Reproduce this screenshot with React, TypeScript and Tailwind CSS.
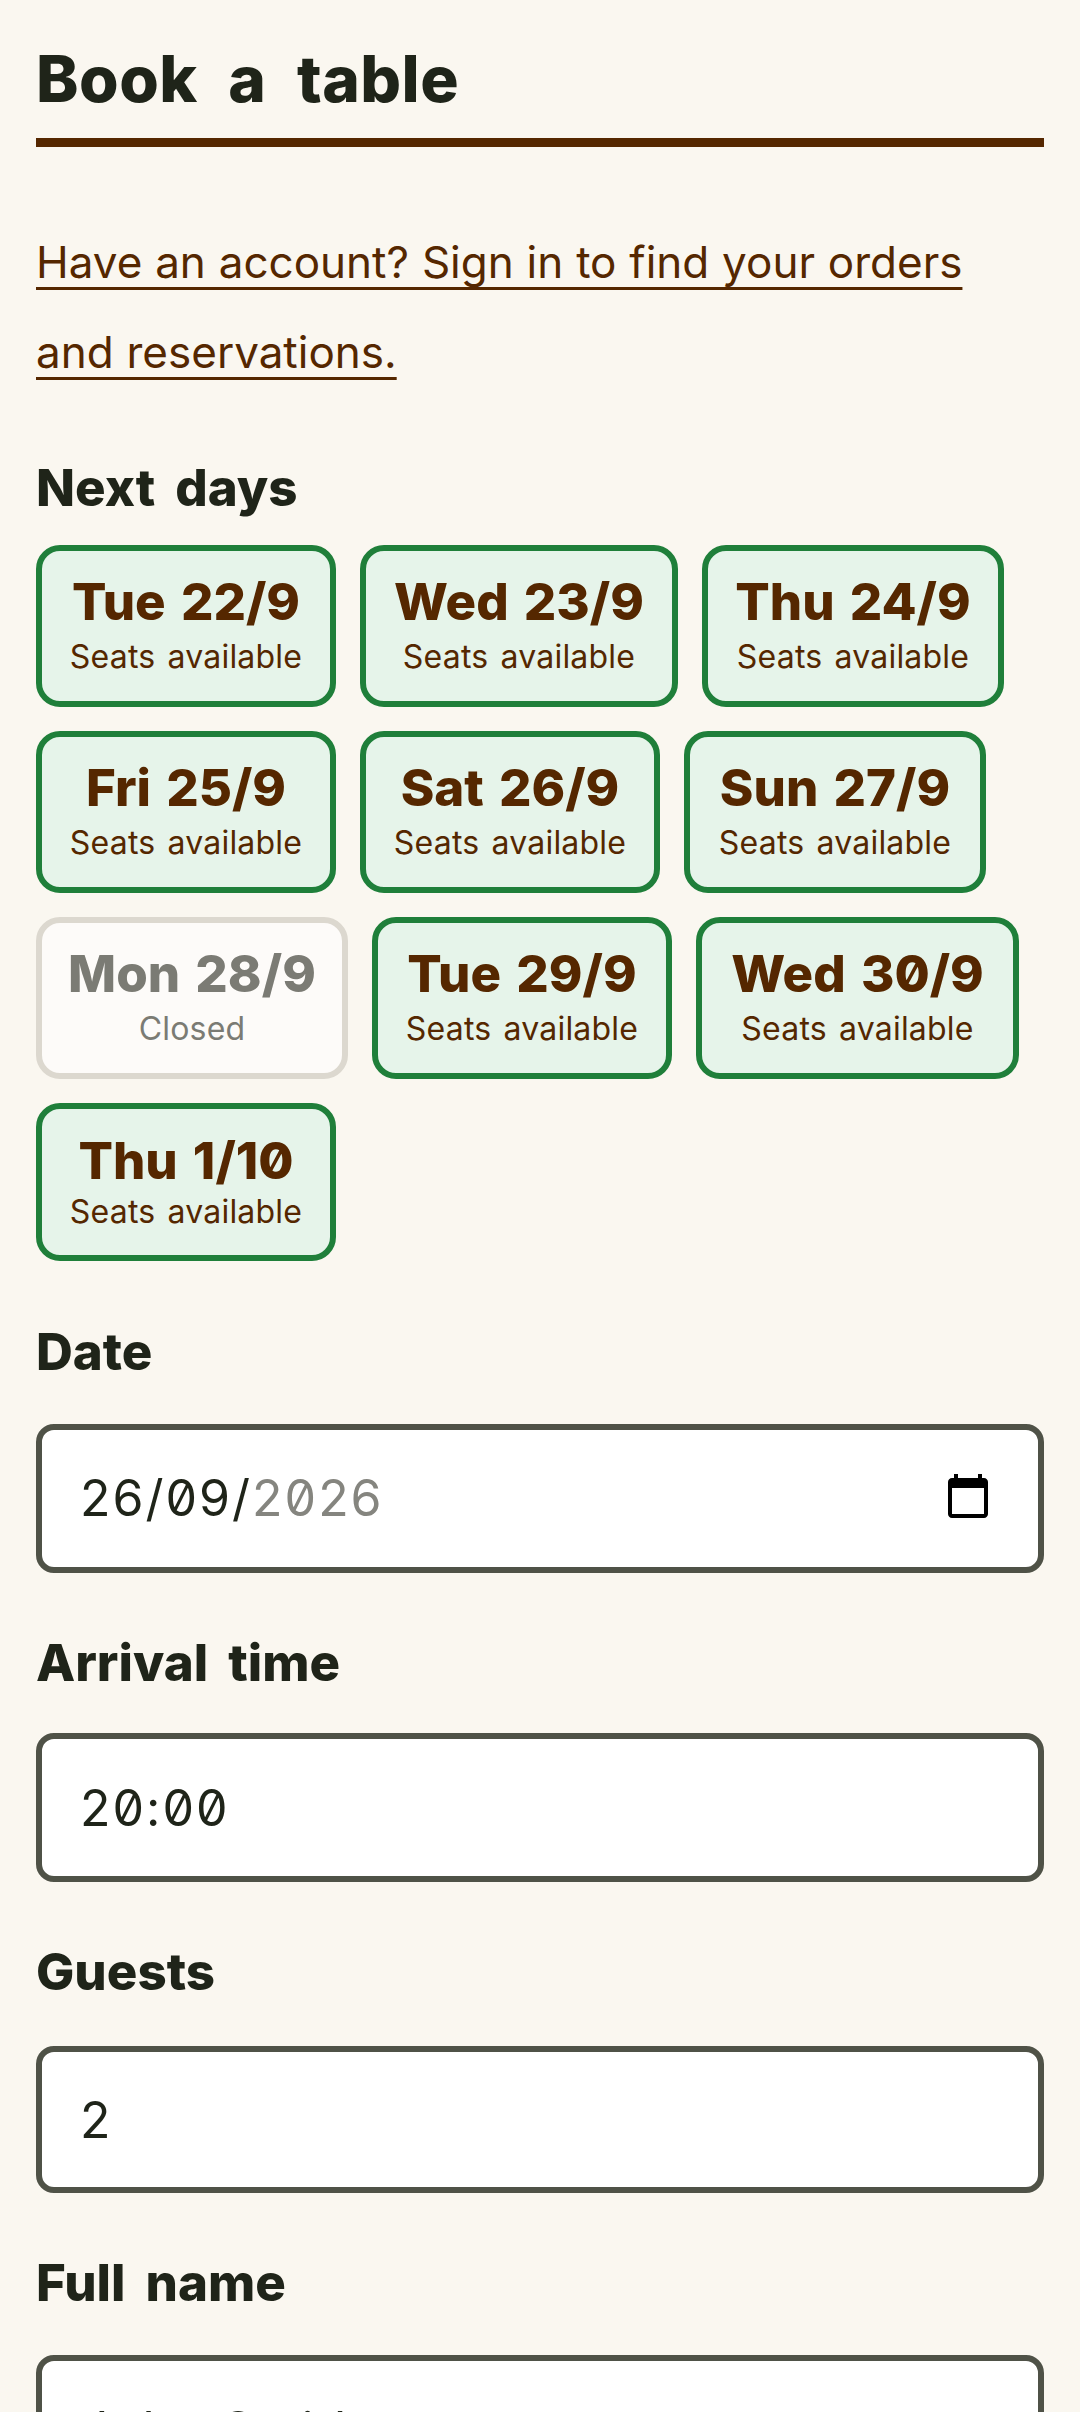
const days = [
  { day: 'Tue 22/9', note: 'Seats available', width: 'w-[300px]' },
  { day: 'Wed 23/9', note: 'Seats available', width: 'w-[318px]' },
  { day: 'Thu 24/9', note: 'Seats available', width: 'w-[302px]' },
  { day: 'Fri 25/9', note: 'Seats available', width: 'w-[300px]' },
  { day: 'Sat 26/9', note: 'Seats available', width: 'w-[300px]' },
  { day: 'Sun 27/9', note: 'Seats available', width: 'w-[302px]' },
  { day: 'Mon 28/9', note: 'Closed', width: 'w-[312px]', closed: true },
  { day: 'Tue 29/9', note: 'Seats available', width: 'w-[300px]' },
  { day: 'Wed 30/9', note: 'Seats available', width: 'w-[323px]' },
  { day: 'Thu 1/10', note: 'Seats available', width: 'w-[300px]', short: true },
]

type Day = { day: string; note: string; width: string; closed?: boolean; short?: boolean }

function DayButton({ day, note, width, closed, short }: Day) {
  return (
    <button
      className={`${width} ${short ? 'h-[158px] pt-[20px]' : 'h-[162px] pt-[19px]'} flex flex-col items-center rounded-[24px] border-[6px] ${
        closed ? 'border-[#dcd8cf] bg-[#fdfbf9] text-[#7b7b74]' : 'border-[#1f7f3a] bg-[#e6f4ea] text-[#552700]'
      }`}
    >
      <span className="text-[51px] leading-[63px] font-extrabold slashed-zero [word-spacing:4px]">{day}</span>
      <span className={`text-[32px] tracking-[0.2px] [word-spacing:3px] ${short ? 'leading-[39px]' : 'leading-[48px]'}`}>{note}</span>
    </button>
  )
}

const labelClass = 'text-[51px] leading-[66px] font-extrabold [word-spacing:9px] text-[#1f2419]'
const boxClass = 'w-full rounded-[18px] border-[6px] border-[#4f5247] bg-white pl-[38px] text-[50px] tracking-[2px] slashed-zero text-[#1f2419]'

function Field({ label, value, labelGap, height }: { label: string; value: string; labelGap: string; height: string }) {
  return (
    <div className="flex flex-col">
      <label className={`${labelClass} ${labelGap}`}>{label}</label>
      <input readOnly value={value} className={`${boxClass} ${height} outline-none`} />
    </div>
  )
}

export default function App() {
  return (
    <div className="h-[2412px] overflow-hidden bg-[#faf7f0] px-[36px] font-['Inter',sans-serif]">
      {/* Title */}
      <h1 className="h-[147px] pt-[37px] border-b-[9px] border-[#552700] text-[64px] leading-[84px] font-extrabold tracking-[0.5px] [word-spacing:16px] text-[#1f2419]">
        Book a table
      </h1>

      <p className="mt-[70px] text-[44px] leading-[90px] [word-spacing:0.5px] text-[#552700]">
        <a className="underline decoration-[3px] underline-offset-[9px] [text-decoration-skip-ink:none]">
          Have an account? Sign in to find your orders and reservations.
        </a>
      </p>

      <h2 className={`mt-[58px] ${labelClass}`}>Next days</h2>

      {/* Day picker */}
      <div className="mt-[24px] flex flex-wrap gap-[24px]">
        {days.map((d) => (
          <DayButton key={d.day} {...d} />
        ))}
      </div>

      {/* Form */}
      <div className="mt-[58px] flex flex-col gap-[57px]">
        <div className="flex flex-col">
          <label className={`${labelClass} mb-[39px]`}>Date</label>
          <div className={`${boxClass} h-[149px] flex items-center justify-between pr-[46px]`}>
            <span>
              26/09/<span className="text-[#85857f]">2026</span>
            </span>
            <svg width="48" height="48" viewBox="0 0 24 24" fill="currentColor" className="mb-[5px] text-black">
              <path d="M20 3h-1V1h-2v2H7V1H5v2H4c-1.1 0-2 .9-2 2v16c0 1.1.9 2 2 2h16c1.1 0 2-.9 2-2V5c0-1.1-.9-2-2-2zm0 18H4V8h16v13z" />
            </svg>
          </div>
        </div>
        <Field label="Arrival time" value="20:00" labelGap="mb-[37px]" height="h-[149px]" />
        <Field label="Guests" value="2" labelGap="mb-[41px]" height="h-[147px]" />
        <Field label="Full name" value="John Smith" labelGap="mb-[39px]" height="h-[149px]" />
      </div>
    </div>
  )
}
